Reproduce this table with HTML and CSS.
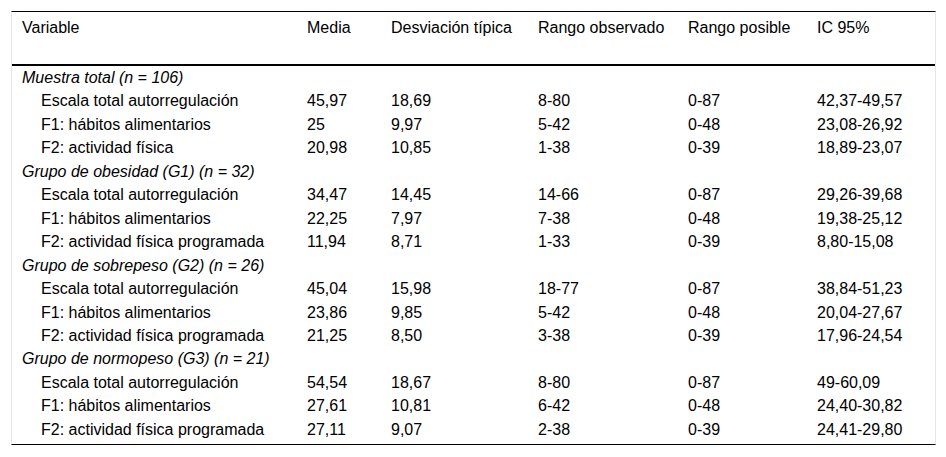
FILE: index.html
```html
<!DOCTYPE html>
<html lang="es">
<head>
<meta charset="utf-8">
<link rel="stylesheet" href="styles.css">
</head>
<body>
<div class="wrap">
<table class="data">
  <colgroup>
    <col class="c1"><col class="c2"><col class="c3"><col class="c4"><col class="c5"><col class="c6">
  </colgroup>
  <thead>
    <tr><th>Variable</th><th>Media</th><th>Desviación típica</th><th>Rango observado</th><th>Rango posible</th><th>IC 95%</th></tr>
  </thead>
  <tbody>
    <tr class="group"><td colspan="6">Muestra total (n = 106)</td></tr>
    <tr><td class="sub">Escala total autorregulación</td><td>45,97</td><td>18,69</td><td>8-80</td><td>0-87</td><td>42,37-49,57</td></tr>
    <tr><td class="sub">F1: hábitos alimentarios</td><td>25</td><td>9,97</td><td>5-42</td><td>0-48</td><td>23,08-26,92</td></tr>
    <tr><td class="sub">F2: actividad física</td><td>20,98</td><td>10,85</td><td>1-38</td><td>0-39</td><td>18,89-23,07</td></tr>
    <tr class="group"><td colspan="6">Grupo de obesidad (G1) (n = 32)</td></tr>
    <tr><td class="sub">Escala total autorregulación</td><td>34,47</td><td>14,45</td><td>14-66</td><td>0-87</td><td>29,26-39,68</td></tr>
    <tr><td class="sub">F1: hábitos alimentarios</td><td>22,25</td><td>7,97</td><td>7-38</td><td>0-48</td><td>19,38-25,12</td></tr>
    <tr><td class="sub">F2: actividad física programada</td><td>11,94</td><td>8,71</td><td>1-33</td><td>0-39</td><td>8,80-15,08</td></tr>
    <tr class="group"><td colspan="6">Grupo de sobrepeso (G2) (n = 26)</td></tr>
    <tr><td class="sub">Escala total autorregulación</td><td>45,04</td><td>15,98</td><td>18-77</td><td>0-87</td><td>38,84-51,23</td></tr>
    <tr><td class="sub">F1: hábitos alimentarios</td><td>23,86</td><td>9,85</td><td>5-42</td><td>0-48</td><td>20,04-27,67</td></tr>
    <tr><td class="sub">F2: actividad física programada</td><td>21,25</td><td>8,50</td><td>3-38</td><td>0-39</td><td>17,96-24,54</td></tr>
    <tr class="group"><td colspan="6">Grupo de normopeso (G3) (n = 21)</td></tr>
    <tr><td class="sub">Escala total autorregulación</td><td>54,54</td><td>18,67</td><td>8-80</td><td>0-87</td><td>49-60,09</td></tr>
    <tr><td class="sub">F1: hábitos alimentarios</td><td>27,61</td><td>10,81</td><td>6-42</td><td>0-48</td><td>24,40-30,82</td></tr>
    <tr class="last"><td class="sub">F2: actividad física programada</td><td>27,11</td><td>9,07</td><td>2-38</td><td>0-39</td><td>24,41-29,80</td></tr>
  </tbody>
</table>
</div>
</body>
</html>
```

FILE: styles.css
```css
html, body {
  margin: 0;
  padding: 0;
  background: #fff;
}
body {
  font-family: "Liberation Sans", Arial, sans-serif;
  font-size: 16px;
  color: #000;
}
.wrap {
  padding: 11px 0 0 11px;
}
.data {
  width: 925px;
  table-layout: fixed;
  border-collapse: separate;
  border-spacing: 0;
  border-top: 1px solid #000;
  border-bottom: 1px solid #000;
  border-left: 1px solid #e6e6e6;
  border-right: 1px solid #e6e6e6;
}
.c1 { width: 285px; }
.c2 { width: 84px; }
.c3 { width: 147px; }
.c4 { width: 150px; }
.c5 { width: 129px; }
.c6 { width: 128px; }
.data th {
  font-weight: normal;
  text-align: left;
  vertical-align: top;
  line-height: 18px;
  padding: 7px 10px 27px 10px;
  border-bottom: 2px solid #000;
  white-space: nowrap;
}
.data td {
  line-height: 21.45px;
  padding: 1px 10px 1px 10px;
  white-space: nowrap;
}
.data .group td {
  font-style: italic;
}
.data td.sub {
  padding-left: 29px;
}
.data .last td {
  padding-bottom: 3.8px;
}
```
